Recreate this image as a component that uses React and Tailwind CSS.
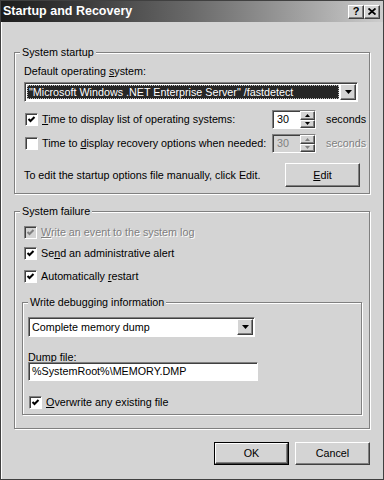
import React from 'react';

const raised =
  'border border-t-white border-l-white border-r-[#404040] border-b-[#404040] shadow-[inset_-1px_-1px_0_#808080]';
const sunken =
  'border border-t-[#808080] border-l-[#808080] border-r-white border-b-white shadow-[inset_1px_1px_0_#404040]';
const dimText = 'text-[#808080] [text-shadow:1px_1px_0_#ffffff]';

const Check = ({ checked, disabled }) => (
  <span
    className={`w-[13px] h-[13px] shrink-0 flex items-center justify-center ${sunken} ${
      disabled ? 'bg-[#d4d4d4]' : 'bg-white'
    }`}
  >
    {checked && (
      <svg width="9" height="9" viewBox="0 0 9 9">
        <path
          d="M1.5 4 L3.5 6 L7.5 2"
          fill="none"
          stroke={disabled ? '#808080' : '#000'}
          strokeWidth="2"
        />
      </svg>
    )}
  </span>
);

const Arrow = ({ className = '' }) => (
  <span className={`w-[16px] h-[16px] shrink-0 flex items-center justify-center bg-[#d4d4d4] ${raised} ${className}`}>
    <svg width="7" height="4" viewBox="0 0 7 4">
      <path d="M0 0 H7 L3.5 4 Z" fill="#000" />
    </svg>
  </span>
);

const Spin = ({ disabled }) => (
  <div className={`w-[44px] h-[19px] flex ${sunken} ${disabled ? 'bg-[#d4d4d4]' : 'bg-white'}`}>
    <span className={`flex-1 pl-[4px] leading-[17px] ${disabled ? 'text-[#808080]' : ''}`}>30</span>
    <div className="w-[15px] flex flex-col">
      <span className={`flex-1 flex items-center justify-center bg-[#d4d4d4] ${raised}`}>
        <svg width="5" height="3" viewBox="0 0 5 3">
          <path d="M0 3 H5 L2.5 0 Z" fill={disabled ? '#808080' : '#000'} />
        </svg>
      </span>
      <span className={`flex-1 flex items-center justify-center bg-[#d4d4d4] ${raised}`}>
        <svg width="5" height="3" viewBox="0 0 5 3">
          <path d="M0 0 H5 L2.5 3 Z" fill={disabled ? '#808080' : '#000'} />
        </svg>
      </span>
    </div>
  </div>
);

const Group = ({ label, className = '', children }) => (
  <fieldset
    className={`min-w-0 border border-[#808080] shadow-[inset_1px_1px_0_#ffffff,1px_1px_0_#ffffff] ${className}`}
  >
    <legend className="ml-[5px] px-[2px] bg-[#d4d4d4] leading-[13px]">{label}</legend>
    {children}
  </fieldset>
);

const TitleButton = ({ children }) => (
  <span
    className={`w-[16px] h-[14px] flex items-center justify-center bg-[#d4d4d4] ${raised} font-bold text-[11px] leading-none`}
  >
    {children}
  </span>
);

export default function App() {
  return (
    <div className="w-[384px] h-[480px] overflow-hidden bg-[#d4d4d4] border border-[#404040] shadow-[inset_1px_1px_0_#ffffff] flex flex-col font-['Liberation_Sans',Arial,sans-serif] text-[10.75px] text-black leading-[13px]">
      <div className="h-[21px] shrink-0 flex items-center justify-between pl-[2px] pr-[3px] bg-linear-to-r from-[#1c1c1c] via-[#6a6a6a] to-[#cdcdcd]">
        <span className="text-white font-bold text-[12.5px]">Startup and Recovery</span>
        <div className="flex">
          <TitleButton>?</TitleButton>
          <TitleButton>
            <svg width="8" height="7" viewBox="0 0 8 7">
              <path d="M0.5 0.5 L7.5 6.5 M7.5 0.5 L0.5 6.5" stroke="#000" strokeWidth="1.8" />
            </svg>
          </TitleButton>
        </div>
      </div>

      <div className="flex-1 flex flex-col px-[13px]">
        <Group label="System startup" className="mt-[24px]">
          <div className="flex flex-col pl-[9px] pr-[11px] pb-[6px]">
            <span className="mt-[6px]">
              Default operating <u>s</u>ystem:
            </span>
            <div className={`mt-[4px] h-[20px] flex items-center bg-white ${sunken} p-[1px]`}>
              <div className="flex-1 min-w-0 h-[14px] mx-[1px] bg-[#262626] text-white border border-dotted border-[#bdbdbd] flex items-center px-[1px] whitespace-nowrap overflow-hidden">
                "Microsoft Windows .NET Enterprise Server" /fastdetect
              </div>
              <Arrow />
            </div>
            <div className="mt-[8px] h-[19px] grid grid-cols-[248px_44px_auto] items-center whitespace-nowrap">
              <div className="flex items-center gap-[4px] ml-[1px]">
                <Check checked />
                <span>
                  <u>T</u>ime to display list of operating systems:
                </span>
              </div>
              <Spin />
              <span className="ml-[10px]">seconds</span>
            </div>
            <div className="mt-[5px] h-[19px] grid grid-cols-[248px_44px_auto] items-center whitespace-nowrap">
              <div className="flex items-center gap-[4px] ml-[1px]">
                <Check />
                <span>
                  Time to <u>d</u>isplay recovery options when needed:
                </span>
              </div>
              <Spin disabled />
              <span className={`ml-[10px] ${dimText}`}>seconds</span>
            </div>
            <div className="mt-[10px] h-[24px] flex items-center justify-between">
              <span>To edit the startup options file manually, click Edit.</span>
              <span className={`w-[75px] h-[24px] -mr-[2px] flex items-center justify-center ${raised}`}>
                <span>
                  <u>E</u>dit
                </span>
              </span>
            </div>
          </div>
        </Group>

        <Group label="System failure" className="mt-[11px]">
          <div className="flex flex-col pl-[7px] pr-[7px] pb-[13px]">
            <div className="mt-[6px] h-[16px] flex items-center gap-[4px] ml-[2px]">
              <Check checked disabled />
              <span className={dimText}>
                <u>W</u>rite an event to the system log
              </span>
            </div>
            <div className="mt-[5px] h-[16px] flex items-center gap-[4px] ml-[2px]">
              <Check checked />
              <span>
                Se<u>n</u>d an administrative alert
              </span>
            </div>
            <div className="mt-[7px] h-[16px] flex items-center gap-[4px] ml-[2px]">
              <Check checked />
              <span>
                Automatically <u>r</u>estart
              </span>
            </div>

            <Group label="Write debugging information" className="mt-[12px]">
              <div className="flex flex-col pl-[5px] pb-[4px]">
                <div className={`mt-[8px] w-[227px] h-[20px] flex items-center bg-white ${sunken} p-[1px]`}>
                  <span className="flex-1 pl-[2px] whitespace-nowrap">Complete memory dump</span>
                  <Arrow />
                </div>
                <span className="mt-[14px]">
                  Dum<u>p</u> file:
                </span>
                <div className={`-mt-[2px] w-[230px] h-[19px] bg-white ${sunken} pl-[3px] leading-[17px]`}>
                  %SystemRoot%\MEMORY.DMP
                </div>
                <div className="mt-[13px] h-[16px] flex items-center gap-[4px] ml-[1px]">
                  <Check checked />
                  <span>
                    <u>O</u>verwrite any existing file
                  </span>
                </div>
              </div>
            </Group>
          </div>
        </Group>

        <div className="mt-[13px] flex justify-end gap-[6px]">
          <span className="border border-black">
            <span className={`w-[73px] h-[21px] flex items-center justify-center ${raised}`}>OK</span>
          </span>
          <span className={`w-[75px] h-[23px] flex items-center justify-center ${raised}`}>Cancel</span>
        </div>
      </div>
    </div>
  );
}
